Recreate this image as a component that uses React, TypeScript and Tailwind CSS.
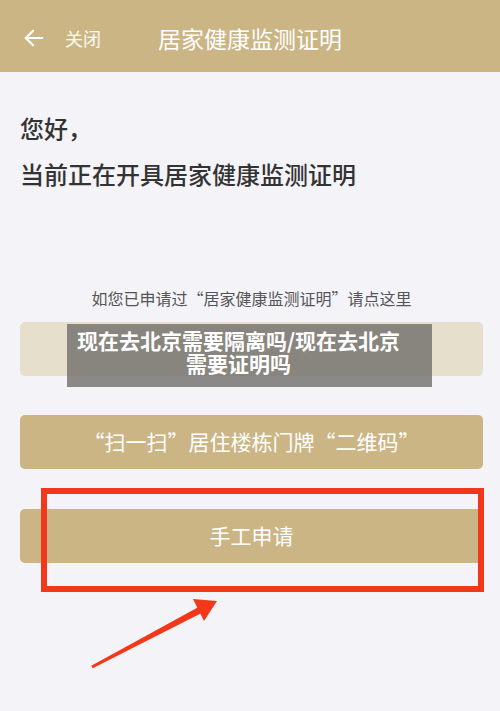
import React from 'react';

const ActionButton: React.FC<{ label: string; className?: string; textClass?: string }> = ({ label, className = '', textClass = '' }) => {
  return (
    <button
      className={`ml-5 mr-[17px] h-[54px] rounded-[5px] flex items-center justify-center ${className}`}
    >
      <span className={textClass}>{label}</span>
    </button>
  );
};

const App: React.FC = () => {
  return (
    <div className="relative w-full min-h-[711px] overflow-hidden bg-[#f4f3f8] font-['Noto_Sans_CJK_SC',sans-serif]">
      {/* Header */}
      <div className="h-[72px] bg-[#cbb585] flex items-center pt-[4px] text-white">
        <svg
          width="22"
          height="22"
          viewBox="0 0 24 24"
          fill="none"
          stroke="currentColor"
          strokeWidth="2.4"
          strokeLinecap="round"
          strokeLinejoin="round"
          className="ml-[23px]"
        >
          <path d="M21 12H3" />
          <path d="M11 4l-8 8 8 8" />
        </svg>
        <span className="ml-[20px] text-[18px] text-white/90">关闭</span>
        <span className="ml-[57px] text-[23px]">居家健康监测证明</span>
      </div>

      {/* Greeting */}
      <div className="mt-[33px] pl-[20px] text-[24px] leading-[46px] font-medium text-[#333333]">
        <div>您好，</div>
        <div>当前正在开具居家健康监测证明</div>
      </div>

      <div className="mt-[89px] text-center text-[16px] leading-[24px] text-[#555555] pl-[3px]">
        如您已申请过“居家健康监测证明”请点这里
      </div>

      <div className="mt-[12px] flex flex-col">
        <ActionButton
          label="在线  提交记录"
          className="bg-[#e6dfcb]"
          textClass="text-[20px] text-white/40"
        />
        <ActionButton
          label="“扫一扫”居住楼栋门牌“二维码”"
          className="mt-[39px] h-[53px] bg-[#cbb585]"
          textClass="text-[21px] text-white"
        />
        <ActionButton
          label="手工申请"
          className="mt-[40px] bg-[#cbb585]"
          textClass="text-[21px] text-white"
        />
      </div>

      {/* Watermark caption */}
      <div className="absolute left-[67px] top-[324px] w-[365px] h-[63px] bg-[rgba(112,110,106,0.8)] pt-[5px] flex flex-col items-center text-white font-bold text-[21px] leading-[23px] whitespace-nowrap">
        <div className="-ml-[22px]">现在去北京需要隔离吗/现在去北京</div>
        <div className="-ml-[22px]">需要证明吗</div>
      </div>

      {/* Red annotation box */}
      <div className="absolute left-[41px] top-[488px] w-[443px] h-[104px] border-[6px] border-[#f2381a]" />

      {/* Red arrow */}
      <svg
        width="135"
        height="80"
        viewBox="0 0 135 80"
        className="absolute left-[88px] top-[595px]"
      >
        <polygon points="3.3,70.7 4.7,73.3 115.6,17.1 112.4,10.9" fill="#f2381a" />
        <polygon points="129,6 105,4 116,26" fill="#f2381a" />
      </svg>
    </div>
  );
};

export default App;
